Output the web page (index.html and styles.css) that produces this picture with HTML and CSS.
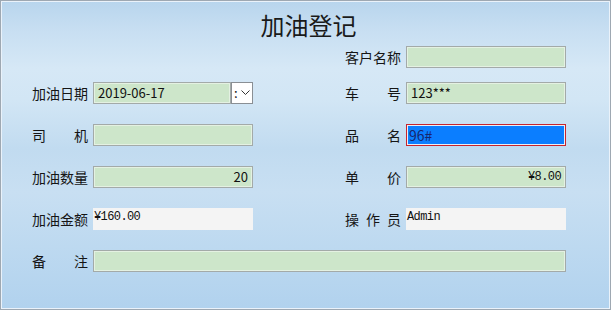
FILE: index.html
```html
<!DOCTYPE html>
<html lang="zh-CN">
<head>
<meta charset="utf-8">
<title>加油登记</title>
<link rel="stylesheet" href="styles.css">
</head>
<body>
<div class="window">
  <h1 class="title">加油登记</h1>
  <div class="top-row">
    <div class="field">
      <span class="label">客户名称</span>
      <span class="input"></span>
    </div>
  </div>
  <div class="form">
    <div class="field">
      <span class="label">加油日期</span>
      <span class="date">
        <span class="input date-text">2019-06-17</span>
        <span class="date-btn"><span class="colon">:</span><svg width="9" height="6" viewBox="0 0 9 6"><path d="M0.5 0.5 L4.5 4.5 L8.5 0.5" fill="none" stroke="#333" stroke-width="1"/></svg></span>
      </span>
    </div>
    <div class="field">
      <span class="label">车号</span>
      <span class="input">123***</span>
    </div>
    <div class="field">
      <span class="label">司机</span>
      <span class="input"></span>
    </div>
    <div class="field">
      <span class="label">品名</span>
      <span class="input focused"><span class="sel">96#</span></span>
    </div>
    <div class="field">
      <span class="label">加油数量</span>
      <span class="input right">20</span>
    </div>
    <div class="field">
      <span class="label">单价</span>
      <span class="input right mono">¥8.00</span>
    </div>
    <div class="field">
      <span class="label">加油金额</span>
      <span class="readonly mono">¥160.00</span>
    </div>
    <div class="field">
      <span class="label">操作员</span>
      <span class="readonly mono">Admin</span>
    </div>
    <div class="field wide">
      <span class="label">备注</span>
      <span class="input grow"></span>
    </div>
  </div>
</div>
</body>
</html>
```
FILE: styles.css
```css
html, body {
  margin: 0;
  padding: 0;
}
body {
  font-family: "Noto Sans CJK SC", "Noto Sans", sans-serif;
  color: #111;
}
.window {
  width: 611px;
  height: 310px;
  box-sizing: border-box;
  border: 1px solid #9ea8b2;
  box-shadow: inset 0 0 0 1px #eaf2fa;
  padding: 9px 0 0 31px;
  background: linear-gradient(180deg, #b8d5ed 0%, #c8dff2 10%, #d6e8f6 22%, #d2e6f5 32%, #c1dbf0 48%, #c8dff2 62%, #bdd9f0 80%, #b1d2ee 100%);
}
.title {
  margin: 0 0 6px 0;
  width: 553px;
  text-align: center;
  font-size: 24px;
  font-weight: normal;
  line-height: 30px;
  color: #1a1a1a;
}
.top-row {
  display: flex;
  justify-content: flex-end;
  width: 534px;
  margin-bottom: 14px;
}
.form {
  display: grid;
  grid-template-columns: 221px 221px;
  column-gap: 92px;
  row-gap: 20px;
}
.field {
  display: flex;
  align-items: center;
  gap: 5px;
  height: 22px;
}
.wide {
  grid-column: 1 / -1;
}
.label {
  width: 56px;
  font-size: 14px;
  line-height: 22px;
  text-align: justify;
  text-align-last: justify;
  white-space: nowrap;
  color: #151515;
}
.input {
  box-sizing: border-box;
  width: 160px;
  height: 22px;
  background: #cde6ca;
  border: 1px solid #a3aaa8;
  box-shadow: inset 0 0 0 1px #e4f1e2;
  font-size: 13px;
  line-height: 20px;
  padding: 0 4px;
  color: #111;
  display: flex;
  align-items: center;
}
.right {
  justify-content: flex-end;
}
.grow {
  width: 474px;
}
.mono {
  font-family: "Liberation Mono", "DejaVu Sans Mono", monospace;
  font-size: 12px;
  letter-spacing: -0.6px;
}
.readonly {
  box-sizing: border-box;
  width: 160px;
  height: 22px;
  background: #f4f4f4;
  padding: 1px 1px;
  line-height: 16px;
  color: #111;
}
.date {
  display: flex;
  width: 160px;
  height: 22px;
}
.date-text {
  width: 138px;
}
.date-btn {
  box-sizing: border-box;
  width: 22px;
  height: 22px;
  background: #fff;
  border: 1px solid #8a8f94;
  display: flex;
  align-items: center;
  padding-left: 2px;
  gap: 3px;
  font-size: 13px;
}
.colon {
  line-height: 18px;
}
.focused {
  border: 1px solid #c8242c;
  box-shadow: inset 0 0 0 1px #e8eef8;
  background: #0b7eff;
  padding: 0 0 0 2px;
}
.sel {
  color: #16276e;
  font-size: 14px;
}
```
